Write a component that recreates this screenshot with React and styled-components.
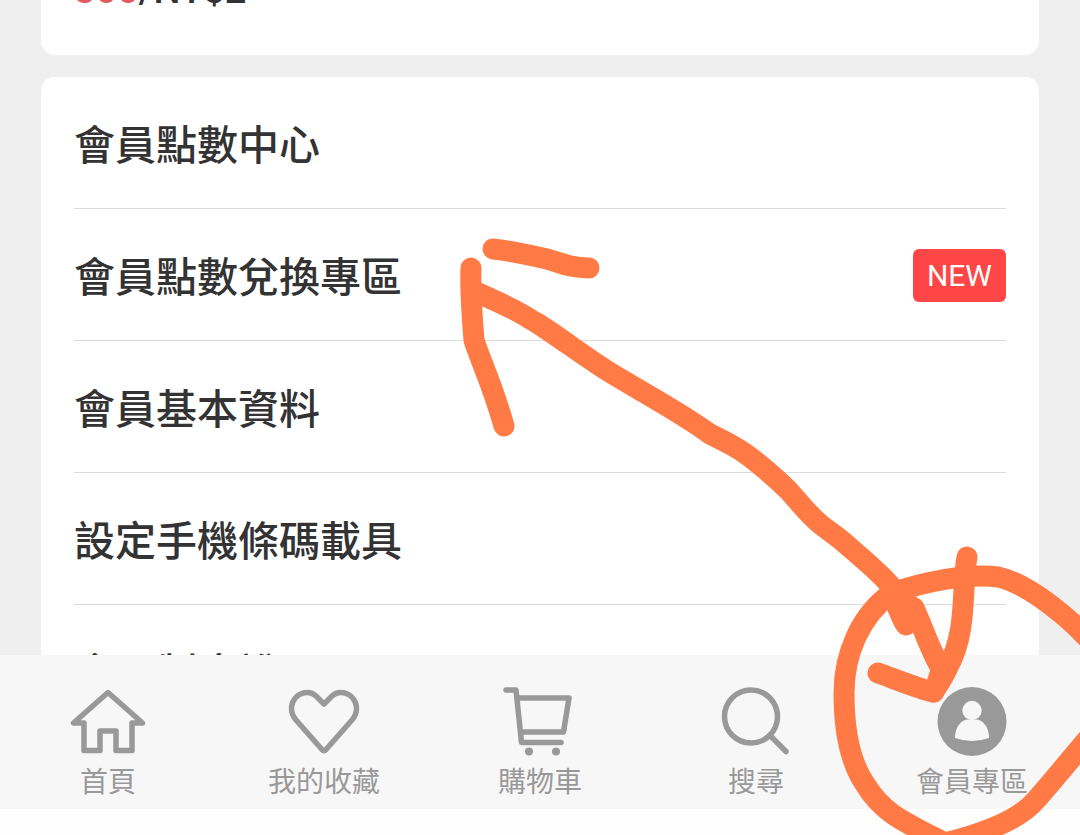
import styled, { createGlobalStyle } from 'styled-components';

const GlobalStyle = createGlobalStyle`
  * {
    box-sizing: border-box;
  }
  body {
    margin: 0;
    background: #fefefe;
    font-family: Roboto, 'Noto Sans CJK TC', sans-serif;
  }
`;

const Screen = styled.div`
  position: relative;
  display: flex;
  flex-direction: column;
  height: 100vh;
  overflow: hidden;
  padding-bottom: 26px;
`;

const Content = styled.main`
  flex: 1;
  min-height: 0;
  display: flex;
  flex-direction: column;
  gap: 22px;
  padding: 0 41px;
  overflow: hidden;
  background: #efefef;
`;

const Card = styled.section`
  flex: none;
  padding: 0 33px;
  border-radius: 14px;
  background: #fff;
`;

const PointsCard = styled(Card)`
  display: flex;
  align-items: flex-end;
  height: 55px;
  padding-bottom: 41px;
  border-top-left-radius: 0;
  border-top-right-radius: 0;
`;

const Points = styled.p`
  margin: 0;
  font-size: 38px;
  line-height: 48px;
  font-weight: 500;
  color: #333;
  span {
    color: #e05a5e;
  }
`;

const Menu = styled.ul`
  margin: 0;
  padding: 0;
  list-style: none;
`;

const MenuItem = styled.li`
  border-bottom: 1px solid #dcdcdc;
`;

const MenuLink = styled.a`
  display: flex;
  align-items: center;
  justify-content: space-between;
  height: 131px;
  padding-top: 2px;
  color: #333;
  text-decoration: none;
`;

const MenuTitle = styled.span`
  padding-top: 4px;
  font-size: 41px;
  line-height: 60px;
  font-weight: 500;
`;

const Badge = styled.span`
  padding: 0 14px;
  border-radius: 6px;
  background: #ff4646;
  font-size: 30px;
  line-height: 53px;
  font-weight: 400;
  color: #fff;
`;

const TabBar = styled.nav`
  flex: none;
  display: grid;
  grid-template-columns: repeat(5, 1fr);
  height: 154px;
  background: #f7f7f7;
`;

const Tab = styled.a`
  display: flex;
  flex-direction: column;
  align-items: center;
  gap: 4px;
  padding-top: 28px;
  font-size: 28px;
  line-height: 40px;
  font-weight: 400;
  color: #999;
  text-decoration: none;
  svg {
    width: 76px;
    height: 76px;
    fill: none;
    stroke: currentColor;
    stroke-width: 5.5;
    stroke-linecap: round;
    stroke-linejoin: round;
  }
`;

const Doodle = styled.svg`
  position: absolute;
  top: 0;
  left: 0;
  width: 100%;
  height: 100%;
  pointer-events: none;
  fill: none;
  stroke: #ff7a45;
  stroke-width: 21;
  stroke-linecap: round;
  stroke-linejoin: round;
`;

const HomeIcon = () => (
  <svg viewBox="0 0 76 76" aria-hidden="true">
    <path d="M38 9.5 3.5 40H14V67.5H30V48H46V67.5H62V40H72.5Z" />
  </svg>
);

const HeartIcon = () => (
  <svg viewBox="0 0 76 76" aria-hidden="true">
    <path d="M38 21L30 13C27.5 10.5 25 9.5 21.5 9.5C12 9.5 5.5 17 5.5 25.5C5.5 30 7 33.5 10 37L36 66.5Q38 68.5 40 66.5L66 37C69 33.5 70.5 30 70.5 25.5C70.5 17 64 9.5 54.5 9.5C51 9.5 48.5 10.5 46 13Z" />
  </svg>
);

const CartIcon = () => (
  <svg viewBox="0 0 76 76" aria-hidden="true">
    <path d="M4 7H14L19.5 59.5H59M15.5 15H67L61.5 49H19" />
    <circle cx="27" cy="68.5" r="4" fill="currentColor" stroke="none" />
    <circle cx="54" cy="68.5" r="4" fill="currentColor" stroke="none" />
  </svg>
);

const SearchIcon = () => (
  <svg viewBox="0 0 76 76" aria-hidden="true">
    <circle cx="33" cy="33.5" r="26.5" />
    <path d="M52 52.5 68 68.5" />
  </svg>
);

const MemberIcon = () => (
  <svg viewBox="0 0 76 76" aria-hidden="true">
    <circle cx="38" cy="38.5" r="34.5" fill="currentColor" stroke="none" />
    <circle cx="38" cy="27.5" r="9.7" fill="#f7f7f7" stroke="none" />
    <path d="M21 55C21 44 27 36.5 34.5 36.5H41.5C49 36.5 55 44 55 55Q38 61 21 55Z" fill="#f7f7f7" stroke="none" />
  </svg>
);

const menuItems = [
  { title: '會員點數中心' },
  { title: '會員點數兌換專區', isNew: true },
  { title: '會員基本資料' },
  { title: '設定手機條碼載具' },
  { title: '會員制度說明' },
];

const tabs = [
  { title: '首頁', Icon: HomeIcon },
  { title: '我的收藏', Icon: HeartIcon },
  { title: '購物車', Icon: CartIcon },
  { title: '搜尋', Icon: SearchIcon },
  { title: '會員專區', Icon: MemberIcon },
];

export default function App() {
  return (
    <>
      <GlobalStyle />
      <Screen>
        <Content>
          <PointsCard>
            <Points><span>300</span>/NT$2</Points>
          </PointsCard>
          <Card>
            <Menu>
              {menuItems.map(({ title, isNew }) => (
                <MenuItem key={title}>
                  <MenuLink href="#">
                    <MenuTitle>{title}</MenuTitle>
                    {isNew && <Badge>NEW</Badge>}
                  </MenuLink>
                </MenuItem>
              ))}
            </Menu>
          </Card>
        </Content>
        <TabBar>
          {tabs.map(({ title, Icon }) => (
            <Tab href="#" key={title}>
              <Icon />
              {title}
            </Tab>
          ))}
        </TabBar>
        {/* hand-drawn arrow from the menu down to the member tab */}
        <Doodle viewBox="0 0 1080 835" preserveAspectRatio="xMidYMid meet" aria-hidden="true">
          <path d="M493 249C512 251 530 255 547 259C563 264 572 268 589 268" />
          <path d="M471 268C470 292 472 316 474 340C480 360 491 380 504 426" />
          <path d="M474 291C500 303 515 309 530 319L537 323C556 335 584 356 606 370C645 394 680 412 710 434C730 444 738 448 750 457C764 468 778 480 789 491C798 501 808 514 820 524C830 532 840 538 848 546C862 558 880 573 890 585C894 597 899 615 906 625" />
          <path d="M890 592 914 608 906 624M914 608C922 625 928 645 940 667" />
          <path d="M967 557C961 590 968 630 948 667Q941 682 933 692C920 689 900 681 878 673" />
          <path d="M942 668 934 692" />
          <path d="M1096 648C1075 622 1030 584 998 577C965 573 920 583 892 593C860 615 844 655 844 693C844 735 852 765 865 784C882 812 900 820 945 843C985 833 1020 819 1036 800C1052 782 1070 760 1096 729" />
        </Doodle>
      </Screen>
    </>
  );
}
